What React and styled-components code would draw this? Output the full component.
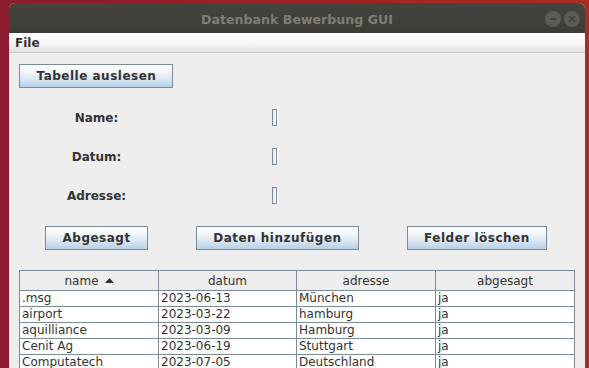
import React from "react";
import styled, { createGlobalStyle } from "styled-components";

const GlobalStyle = createGlobalStyle`
  html, body { margin: 0; padding: 0; }
  body {
    width: 589px;
    height: 368px;
    overflow: hidden;
    font-family: "DejaVu Sans", "Liberation Sans", sans-serif;
  }
`;

const Desktop = styled.div`
  width: 589px;
  height: 368px;
  box-sizing: border-box;
  padding: 3px 4px 0 9px;
  background: linear-gradient(90deg, #8c1b2d 0%, #9a2228 45%, #aa2b1f 100%);
  overflow: hidden;
  display: flex;
  flex-direction: column;
`;

const Window = styled.div`
  width: 576px;
  flex: 1;
  display: flex;
  flex-direction: column;
  background: #eeeeee;
  border-radius: 6px 6px 0 0;
  overflow: hidden;
`;

const TitleBar = styled.div`
  height: 30px;
  flex-shrink: 0;
  background: linear-gradient(to bottom, #45443f 0%, #3c3b37 100%);
  display: grid;
  grid-template-columns: 1fr auto 1fr;
  align-items: center;
`;

const Title = styled.div`
  grid-column: 2;
  font-family: "DejaVu Sans", sans-serif;
  font-weight: bold;
  font-size: 12.6px;
  color: #7f7d78;
  white-space: nowrap;
  padding-top: 2px;
`;

const Controls = styled.div`
  grid-column: 3;
  justify-self: end;
  display: flex;
  gap: 3px;
  padding-right: 5px;
  padding-top: 2px;
`;

const CircleButton = styled.div`
  width: 16px;
  height: 16px;
  border-radius: 50%;
  background: #5c5b57;
  display: flex;
  align-items: center;
  justify-content: center;
`;

const MenuBar = styled.div`
  height: 19px;
  flex-shrink: 0;
  background: linear-gradient(to bottom, #ffffff 0%, #f6f6f6 50%, #e2e2e2 100%);
  border-bottom: 1px solid #c9c9c9;
  display: flex;
  align-items: center;
  padding-left: 6px;
`;

const MenuItem = styled.span`
  font-weight: bold;
  font-size: 12px;
  color: #333333;
  padding-top: 1px;
`;

const Content = styled.div`
  flex: 1;
  padding: 11px 0 0 10px;
  display: flex;
  flex-direction: column;
  align-items: flex-start;
`;

const Button = styled.button`
  height: 24px;
  box-sizing: border-box;
  margin: 0;
  padding: 0 16px 0 16.5px;
  border: 1px solid #7a8a99;
  border-radius: 0;
  background: linear-gradient(
    to bottom,
    #ffffff 0%,
    #f4f8fb 30%,
    #dde8f3 60%,
    #b8cfe5 100%
  );
  font-family: "DejaVu Sans", sans-serif;
  font-weight: bold;
  font-size: 12px;
  letter-spacing: 0.5px;
  color: #333333;
  white-space: nowrap;
  cursor: default;
`;

const Form = styled.div`
  margin-top: 10px;
  display: grid;
  grid-template-columns: 155px 200px;
  grid-auto-rows: 39px;
  align-items: center;
`;

const Label = styled.div`
  text-align: center;
  font-weight: bold;
  font-size: 12px;
  color: #333333;
`;

const Field = styled.div`
  justify-self: center;
  width: 5px;
  height: 17px;
  box-sizing: border-box;
  border: 1px solid #7a8a99;
  box-shadow: inset -1px 0 0 #ffffff, 1px 0 0 #ffffff;
  background: #eeeeee;
  margin-top: -1px;
`;

const ButtonRow = styled.div`
  margin-top: 11px;
  padding-left: 26px;
  display: flex;
  gap: 48px;
`;

const Table = styled.div`
  margin-top: 20px;
  width: 556px;
  display: flex;
  flex-direction: column;
`;

const Row = styled.div`
  display: grid;
  grid-template-columns: 139px 138px 139px 140px;
`;

const HeaderCell = styled.div`
  height: 19px;
  box-sizing: content-box;
  border-top: 1px solid #7a8a99;
  border-bottom: 1px solid #7a8a99;
  border-left: 1px solid #7a8a99;
  border-right: ${(p) => (p.$last ? "1px solid #7a8a99" : "none")};
  background: #eeeeee;
  display: flex;
  align-items: center;
  justify-content: center;
  gap: 6px;
  font-size: 12px;
  color: #333333;
`;

const Cell = styled.div`
  height: 15px;
  line-height: 15px;
  box-sizing: content-box;
  border-bottom: 1px solid #7a8a99;
  border-left: 1px solid #7a8a99;
  border-right: ${(p) => (p.$last ? "1px solid #7a8a99" : "none")};
  background: #ffffff;
  padding-left: 2px;
  font-size: 12px;
  color: #333333;
  white-space: nowrap;
  overflow: hidden;
`;

const columns = ["name", "datum", "adresse", "abgesagt"];
const rows = [
  [".msg", "2023-06-13", "München", "ja"],
  ["airport", "2023-03-22", "hamburg", "ja"],
  ["aquilliance", "2023-03-09", "Hamburg", "ja"],
  ["Cenit Ag", "2023-06-19", "Stuttgart", "ja"],
  ["Computatech", "2023-07-05", "Deutschland", "ja"],
  ["Dataport", "2023-05-30", "Hamburg", "ja"],
];

const SortArrow = () => (
  <svg width="9" height="5" viewBox="0 0 9 5">
    <polygon points="0,5 4.5,0 9,5" fill="#26323e" />
  </svg>
);

export default function App() {
  return (
    <>
      <GlobalStyle />
      <Desktop>
        <Window>
          <TitleBar>
            <Title>Datenbank Bewerbung GUI</Title>
            <Controls>
              <CircleButton>
                <svg width="8" height="8" viewBox="0 0 8 8">
                  <line x1="0.5" y1="4" x2="7.5" y2="4" stroke="#3c3b37" strokeWidth="1.6" />
                </svg>
              </CircleButton>
              <CircleButton>
                <svg width="8" height="8" viewBox="0 0 8 8">
                  <line x1="1" y1="1" x2="7" y2="7" stroke="#3f3e3a" strokeWidth="1.3" />
                  <line x1="7" y1="1" x2="1" y2="7" stroke="#3f3e3a" strokeWidth="1.3" />
                </svg>
              </CircleButton>
            </Controls>
          </TitleBar>
          <MenuBar>
            <MenuItem>File</MenuItem>
          </MenuBar>
          <Content>
            <Button>Tabelle auslesen</Button>
            <Form>
              <Label>Name:</Label>
              <Field />
              <Label>Datum:</Label>
              <Field />
              <Label>Adresse:</Label>
              <Field />
            </Form>
            <ButtonRow>
              <Button>Abgesagt</Button>
              <Button>Daten hinzufügen</Button>
              <Button>Felder löschen</Button>
            </ButtonRow>
            <Table>
              <Row>
                {columns.map((c, i) => (
                  <HeaderCell key={c} $last={i === columns.length - 1}>
                    <span>{c}</span>
                    {i === 0 && <SortArrow />}
                  </HeaderCell>
                ))}
              </Row>
              {rows.map((r, ri) => (
                <Row key={ri}>
                  {r.map((v, ci) => (
                    <Cell key={ci} $last={ci === r.length - 1}>
                      {v}
                    </Cell>
                  ))}
                </Row>
              ))}
            </Table>
          </Content>
        </Window>
      </Desktop>
    </>
  );
}
